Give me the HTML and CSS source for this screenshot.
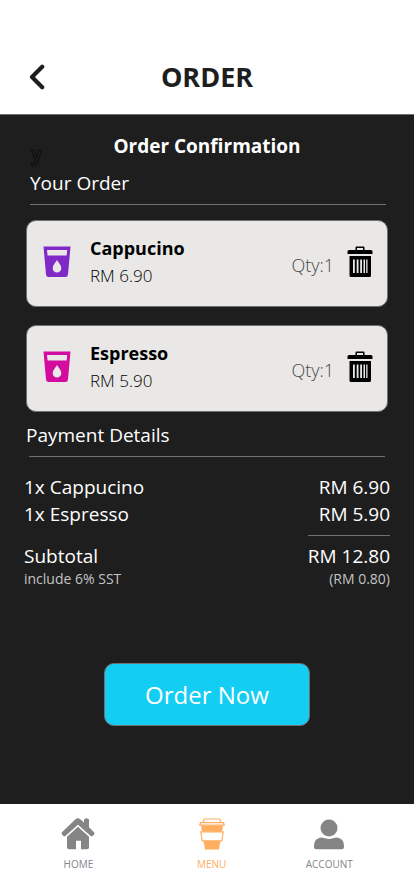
FILE: index.html
```html
<!DOCTYPE html>
<html lang="en">
<head>
<meta charset="utf-8">
<meta name="viewport" content="width=device-width, initial-scale=1">
<title>Order</title>
<link rel="stylesheet" href="styles.css">
</head>
<body>
<header class="topbar">
  <button class="back" type="button" aria-label="Back">
    <svg width="16" height="26" viewBox="0 0 16 26"><path d="M13.2 2.8 3 13l10.200 10.200" fill="none" stroke="#1e1e1e" stroke-width="4.200" stroke-linecap="round" stroke-linejoin="round"/></svg>
  </button>
  <h1>ORDER</h1>
</header>
<main>
  <div class="confirm">
    <span class="mark">y</span>
    <h2>Order Confirmation</h2>
  </div>
  <section class="order">
    <h3>Your Order</h3>
    <ul class="items">
      <li class="card">
        <svg class="cup violet" width="28" height="32" viewBox="0 0 28 32"><path fill="currentColor" fill-rule="evenodd" d="M.5.5h27L25 28.500Q24.700 31 22.500 31h-17Q3.300 31 3 28.500ZM4 4l.6 5.500h19L24.200 4ZM14 14c-1.500 2.600-4.300 5.300-4.300 8.200a4.300 4.300 0 0 0 8.600 0c0-2.900-2.800-5.600-4.300-8.200Z"/></svg>
        <div class="info"><h4>Cappucino</h4><p>RM 6.90</p></div>
        <span class="qty">Qty:1</span>
        <button class="trash" type="button" aria-label="Remove Cappucino"><svg width="26" height="32" viewBox="0 0 26 32"><path fill="#000" fill-rule="evenodd" d="M8.500 4V1.500Q8.500.5 9.500.5h7q1 0 1 1V4H24q1.500 0 1.500 1.500V8H.5V5.500Q.5 4 2 4ZM10 4h6V2h-6ZM2.500 10h21.500v19.500q0 1.500-1.500 1.500H4q-1.500 0-1.500-1.500ZM6 13.500V27h1.800V13.500ZM9.700 13.500V27h1.800V13.500ZM13.200 13.500V27H15V13.500ZM16.500 13.500V27h1.500V13.500ZM19.200 13.500V27h1.300V13.500Z"/></svg></button>
      </li>
      <li class="card">
        <svg class="cup pink" width="28" height="32" viewBox="0 0 28 32"><path fill="currentColor" fill-rule="evenodd" d="M.5.5h27L25 28.500Q24.700 31 22.500 31h-17Q3.300 31 3 28.500ZM4 4l.6 5.500h19L24.200 4ZM14 14c-1.500 2.600-4.300 5.300-4.300 8.200a4.300 4.300 0 0 0 8.600 0c0-2.900-2.800-5.600-4.300-8.200Z"/></svg>
        <div class="info"><h4>Espresso</h4><p>RM 5.90</p></div>
        <span class="qty">Qty:1</span>
        <button class="trash" type="button" aria-label="Remove Espresso"><svg width="26" height="32" viewBox="0 0 26 32"><path fill="#000" fill-rule="evenodd" d="M8.500 4V1.500Q8.500.5 9.500.5h7q1 0 1 1V4H24q1.500 0 1.500 1.500V8H.5V5.500Q.5 4 2 4ZM10 4h6V2h-6ZM2.500 10h21.500v19.500q0 1.500-1.500 1.500H4q-1.500 0-1.500-1.500ZM6 13.500V27h1.800V13.500ZM9.700 13.500V27h1.800V13.500ZM13.200 13.500V27H15V13.500ZM16.500 13.500V27h1.500V13.500ZM19.200 13.500V27h1.300V13.500Z"/></svg></button>
      </li>
    </ul>
  </section>
  <section class="payment">
    <h3>Payment Details</h3>
    <hr class="divider">
    <table>
      <tbody>
        <tr><th scope="row">1x Cappucino</th><td>RM 6.90</td></tr>
        <tr><th scope="row">1x Espresso</th><td>RM 5.90</td></tr>
      </tbody>
      <tbody>
        <tr><td colspan="2"><hr class="sum"></td></tr>
        <tr><th scope="row">Subtotal</th><td>RM 12.80</td></tr>
        <tr class="tax"><th scope="row">include 6% SST</th><td>(RM 0.80)</td></tr>
      </tbody>
    </table>
  </section>
  <button class="submit" type="button">Order Now</button>
</main>
<nav class="tabs">
  <a href="#home">
    <svg width="34" height="32" viewBox="0 0 34 32"><path fill="currentColor" d="M14.500 1.200Q17 -.8 19.300 1.200L23 4.600V2Q23 .5 24.500.5h2.200Q28 .5 28 2v7.300l4.800 4.800q1.200 1.200 0 2.600l-1 1.100q-1.200 1.100-2.400 0L17 6.700 4.600 17.800q-1.200 1.100-2.400 0l-1-1.100q-1.200-1.400 0-2.600Z"/><path fill="currentColor" d="M17 8.800 28 18.700v10.600q0 2-2 2h-6v-8.500h-5v8.500H8q-2 0-2-2V18.700Z"/></svg>
    <span>HOME</span>
  </a>
  <a href="#menu" class="active">
    <svg width="28" height="32" viewBox="0 0 28 32"><g fill="none" stroke="currentColor" stroke-width="1.200"><path d="M5 4.500 6.300 1h15.400L23 4.500M2.500 4.700h23l.8 2.500H1.700ZM2.800 13.800h22.400l-1.400 9H4.200Z"/></g><path fill="currentColor" d="M3 7.500h22l-1 6H4ZM5.500 23h17l-1.600 8.500H7.100Z"/></svg>
    <span>MENU</span>
  </a>
  <a href="#account">
    <svg width="30" height="32" viewBox="0 0 30 32"><circle cx="15" cy="10" r="8.500" fill="currentColor"/><path fill="currentColor" d="M7 19.500q2 0 4 .8 4 1.300 8 0 2-.8 4-.8 7 1 7 8v1.500q0 2.300-2.300 2.300H2.300Q0 31.300 0 29v-1.500q0-7 7-8Z"/></svg>
    <span>ACCOUNT</span>
  </a>
</nav>
</body>
</html>
```

FILE: styles.css
```css
* { box-sizing: border-box; }

body {
  margin: 0;
  min-height: 100vh;
  display: flex;
  flex-direction: column;
  background: #1e1e1e;
  color: #fff;
  font-family: "Open Sans", "Noto Sans", sans-serif;
}

h1, h2, h3, h4, p, ul { margin: 0; padding: 0; }

button { font: inherit; border: 0; padding: 0; background: none; cursor: pointer; }

svg { display: block; }

.topbar {
  display: grid;
  grid-template-columns: 1fr auto 1fr;
  align-items: center;
  padding: 56px 29px 16px;
  background: #fff;
  color: #1e1e1e;
  border-bottom: 1px solid #707070;
}

.back { justify-self: start; }

h1 { font-size: 27px; line-height: 42px; font-weight: 700; }

main { flex: 1; display: flex; flex-direction: column; padding: 16px 26px; }

.confirm {
  display: grid;
  grid-template-columns: 1fr auto 1fr;
  padding: 0 5px;
}

.mark {
  align-self: end;
  font-size: 19px;
  line-height: 14px;
  font-weight: 700;
  color: #1e1e1e;
  -webkit-text-stroke: 1px #0c0c0c;
}

h2 { font-size: 19px; line-height: 30px; font-weight: 700; }

h3 { font-size: 19px; line-height: 28px; font-weight: 400; }

.order h3 {
  margin: 8px 2px 15px 4px;
  padding-bottom: 7px;
  border-bottom: 1px solid #707070;
}

.items { list-style: none; display: grid; gap: 18px; }

.card {
  display: flex;
  align-items: center;
  height: 87px;
  padding: 0 14px 4px 16px;
  background: #e9e8e6;
  color: #000;
  border: 1px solid #707070;
  border-radius: 10px;
}

.violet { color: #8129c7; }
.pink { color: #d30b9f; }

.info { flex: 1; padding-left: 19px; }

h4 { font-size: 18px; line-height: 28px; font-weight: 700; }

.info p { font-size: 17px; line-height: 28px; font-weight: 300; }

.qty { padding: 6px 13px 0 0; font-size: 18px; line-height: 24px; font-weight: 300; color: #484848; }

.payment { margin: 0 -2px; }

.payment h3 { padding: 9px 2px 7px; }

.payment table {
  width: 100%;
  border-collapse: collapse;
  font-size: 19px;
  line-height: 27px;
}

th, td { padding: 0; font-weight: 400; }
th { text-align: left; }
td { text-align: right; }

hr { border: 0; border-top: 1px solid #707070; }

.divider { margin: 0 5px 17px; }

.sum { width: 82px; margin: 7px 0 7px auto; }

.tax { font-size: 14px; line-height: 18px; color: #c4c4c4; }

.submit {
  align-self: center;
  width: 206px;
  height: 63px;
  margin-top: 75px;
  background: #13cdf3;
  color: #fff;
  border: 1px solid #707070;
  border-radius: 10px;
  font-size: 24px;
}

.tabs {
  display: grid;
  grid-template-columns: 10fr 7fr 8fr;
  height: 92px;
  padding: 14px 22px 0 0;
  background: #fff;
}

.tabs a {
  display: flex;
  flex-direction: column;
  align-items: center;
  gap: 8px;
  color: #858585;
  text-decoration: none;
  font-size: 10px;
  line-height: 12px;
}

.tabs .active { color: #ffad5f; }
```
